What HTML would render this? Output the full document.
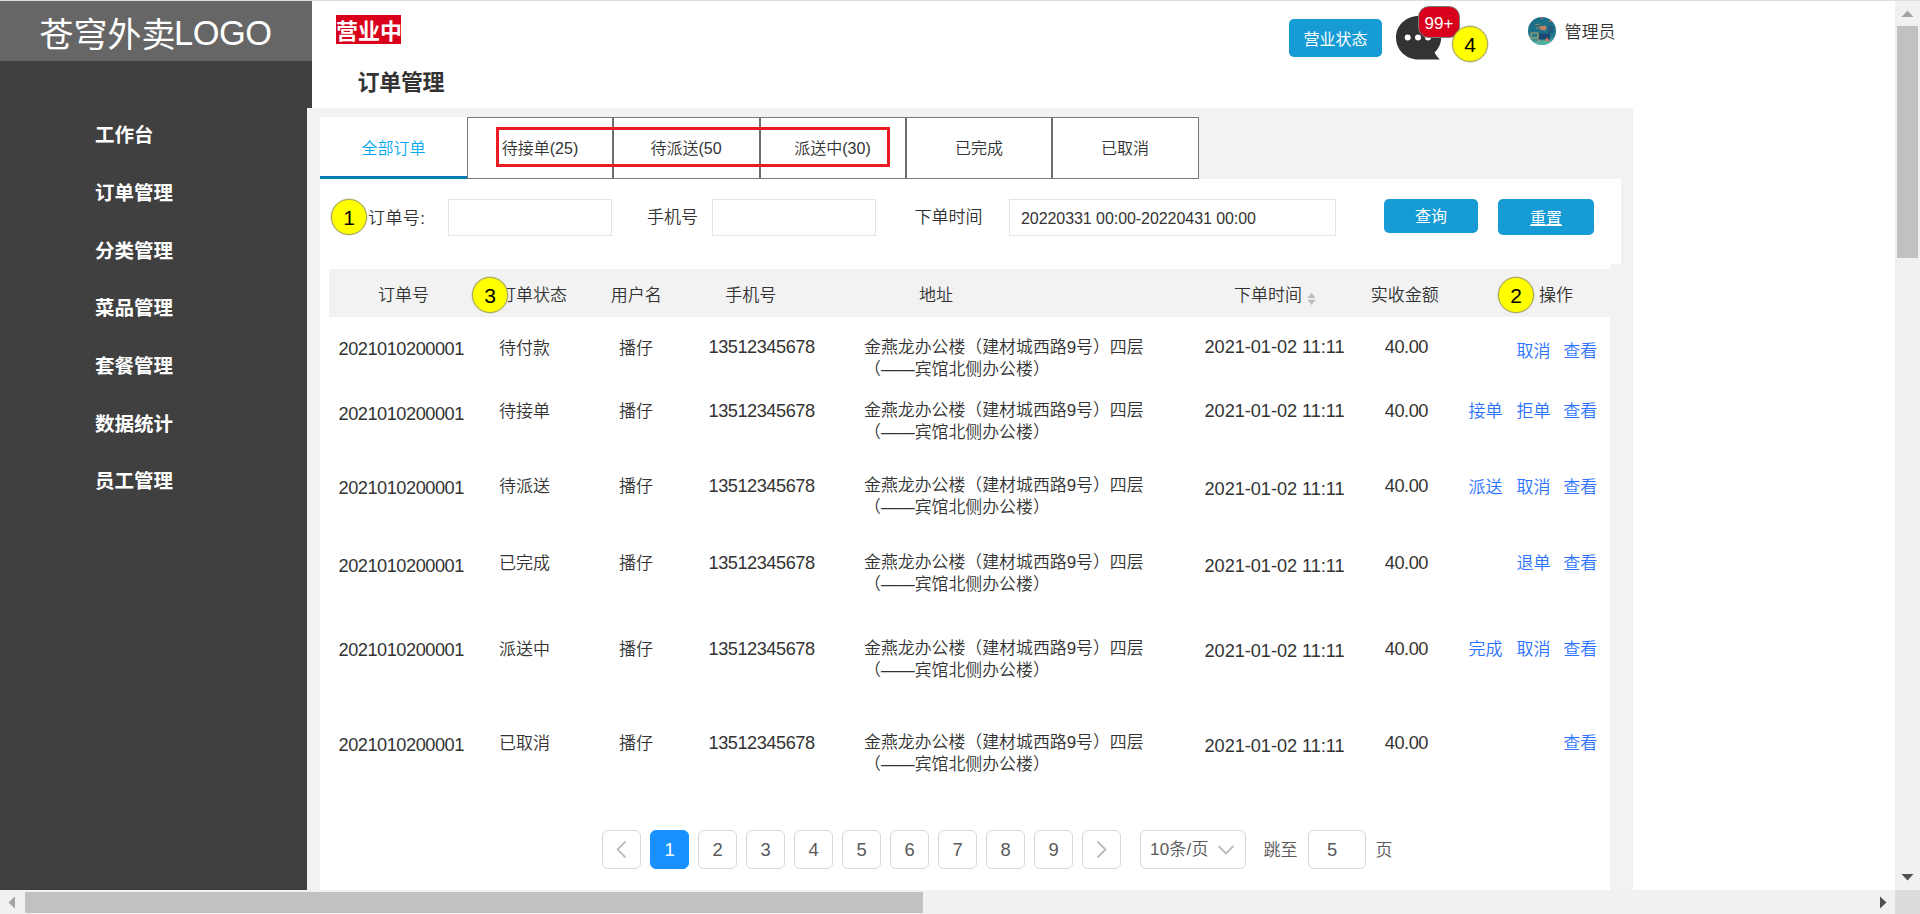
<!DOCTYPE html>
<html lang="zh-CN">
<head>
<meta charset="utf-8">
<title>订单管理</title>
<style>
html,body{margin:0;padding:0;}
body{width:1920px;height:914px;overflow:hidden;position:relative;background:#fff;
  font-family:"Liberation Sans","Noto Sans CJK SC",sans-serif;color:#333;font-size:17px;font-weight:350;}
.abs{position:absolute;}
.t{position:absolute;white-space:nowrap;line-height:1;}
#topline{left:0;top:0;width:1920px;height:1px;background:#dcdfe0;}
#side{left:0;top:0;width:312px;height:890px;background:#404040;}
#logo{left:0;top:1px;width:312px;height:60px;background:#666;}
#logo>span{left:39.5px;top:14.5px;font-size:34px;color:#fff;font-weight:400;}
#logo .lc{position:relative;top:2px;}
#logo .ll{position:relative;top:0.6px;left:-1.5px;font-size:34.4px;letter-spacing:-0.5px;}
.menu{left:95px;font-size:19.5px;font-weight:bold;color:#fff;}
#panel{left:307px;top:108px;width:1326px;height:782px;background:#f2f2f2;}
#open{left:336px;top:15px;width:65px;height:29px;background:#d9001b;}
#open span{left:0;top:5.5px;width:65px;text-align:center;font-size:22px;font-weight:bold;color:#fff;}
#title{left:357.5px;top:72px;letter-spacing:-0.3px;font-size:22px;font-weight:bold;color:#333;}
.btn{background:#169bd5;border-radius:5px;color:#fff;text-align:center;font-weight:400;}
.circle{width:34px;height:34px;border:1px solid #a8a85c;box-shadow:0 0 0 0.5px rgba(150,150,90,.5);border-radius:50%;background:#ffff00;color:#000;
  font-size:21px;text-align:center;line-height:36px;}
.tt{top:140.7px;width:146px;text-align:center;font-size:16px;color:#333;}
#filter{left:320px;top:179px;width:1301px;height:85px;background:#fff;}
#tablebg{left:320px;top:264px;width:1290px;height:626px;background:#fff;}
#thead{left:329px;top:269px;width:1281px;height:48px;background:#f2f2f2;}
.inp{border:1px solid #e4e4e4;background:#fff;box-sizing:border-box;}
.a{color:#2a72ff;}
.pg{top:830px;width:39px;height:39px;box-sizing:border-box;border:1px solid #d9d9d9;border-radius:6px;background:#fff;
  text-align:center;line-height:37px;font-size:18.4px;color:#5a5a5a;}
</style>
</head>
<body>
<div class="abs" id="side"></div>
<div class="abs" id="logo"><span class="t"><span class="lc">苍穹外卖</span><span class="ll">LOGO</span></span></div>
<div class="abs" id="topline"></div>
<div class="t menu" style="top:126px">工作台</div>
<div class="t menu" style="top:184px">订单管理</div>
<div class="t menu" style="top:241.8px">分类管理</div>
<div class="t menu" style="top:299.3px">菜品管理</div>
<div class="t menu" style="top:357px">套餐管理</div>
<div class="t menu" style="top:414.7px">数据统计</div>
<div class="t menu" style="top:472.4px">员工管理</div>

<div class="abs" id="open"><span class="t">营业中</span></div>
<div class="t" id="title">订单管理</div>

<div class="abs" id="panel"></div>
<div class="abs" id="filter"></div>
<div class="abs" id="tablebg"></div>
<div class="abs" id="thead"></div>
<div class="abs btn" style="left:1289px;top:19px;width:93px;height:38px;"><span class="t" style="left:0;width:93px;top:13px;font-size:16px;">营业状态</span></div>
<svg class="abs" style="left:1394px;top:14px" width="50" height="48" viewBox="0 0 50 48">
  <path d="M24.5 2 C11.8 2 2 11.5 2 23.6 C2 36 11.8 45.6 24.5 45.6 L45.8 45.6 C43.8 43.6 42 41.2 40.6 38.6 C44.8 34.8 47.2 29.4 47.2 23.6 C47.2 11.5 37.2 2 24.500 2 Z" fill="#333"/>
  <circle cx="13.7" cy="23.5" r="3" fill="#fff"/><circle cx="24" cy="23.5" r="3" fill="#fff"/><circle cx="34" cy="23.5" r="3" fill="#fff"/>
</svg>
<div class="abs" style="left:1418px;top:6px;width:42px;height:32px;box-sizing:border-box;border:1px solid #797979;border-radius:11px;background:#d9001b;"><span class="t" style="left:0;width:40px;text-align:center;top:7.5px;font-size:17px;color:#fff;">99+</span></div>
<div class="abs circle" style="left:1452px;top:26px;">4</div>
<svg class="abs" style="left:1528px;top:17px" width="28" height="28" viewBox="0 0 28 28">
  <defs><clipPath id="av"><circle cx="14" cy="14" r="14"/></clipPath>
  <filter id="avb" x="-20%" y="-20%" width="140%" height="140%"><feGaussianBlur stdDeviation="0.7"/></filter>
  <linearGradient id="avg" x1="0" y1="0" x2="0" y2="1"><stop offset="0" stop-color="#1b6c85"/><stop offset="0.6" stop-color="#20718a"/><stop offset="1" stop-color="#45a89a"/></linearGradient></defs>
  <g clip-path="url(#av)"><rect width="28" height="28" fill="url(#avg)"/>
  <g filter="url(#avb)">
  <path d="M11 9.500 L17 8.500 L19 11 L16.500 13.500 L12 12.500Z" fill="#c9805f"/>
  <path d="M7 8 l5 -1 M8 11 l3 0" stroke="#b98a5a" stroke-width="0.800" fill="none"/>
  <path d="M3 16 h7 v5 h-7z" fill="none" stroke="#b9a96a" stroke-width="1"/>
  <rect x="11" y="16.500" width="11" height="6" fill="#1c4a72"/>
  <rect x="20" y="9" width="5" height="7" fill="#235a7c"/>
  <path d="M9 24 l1.500 -2.500 l2 2.500z M16 24.500 l3 -4 l3 4z" fill="#dd735f"/>
  <circle cx="22.500" cy="3.500" r="1.300" fill="#d8705c"/><circle cx="13.700" cy="1" r="1" fill="#d8705c"/>
  <path d="M2 25 q12 -3 24 0 v3 h-24z" fill="#4fb0a0"/>
  </g></g>
</svg>
<div class="t" style="left:1564.5px;top:23.8px;font-size:17px;color:#333;">管理员</div>

<div class="abs" style="left:320px;top:117px;width:147px;height:59px;background:#fff;border-bottom:3px solid #027db4;"><span class="t" style="left:0;width:147px;text-align:center;top:23.8px;font-size:16px;color:#02a7f0;">全部订单</span></div>
<div class="abs" style="left:467px;top:117px;width:730px;height:60px;border:1px solid #797979;background:#fff;"></div>
<div class="abs" style="left:612px;top:118px;width:2px;height:60px;background:#6e6e6e;"></div>
<div class="abs" style="left:759px;top:118px;width:2px;height:60px;background:#6e6e6e;"></div>
<div class="abs" style="left:905px;top:118px;width:2px;height:60px;background:#6e6e6e;"></div>
<div class="abs" style="left:1051px;top:118px;width:2px;height:60px;background:#6e6e6e;"></div>
<div class="t tt" style="left:467px;">待接单(25)</div>
<div class="t tt" style="left:613px;">待派送(50</div>
<div class="t tt" style="left:760px;width:145px;">派送中(30)</div>
<div class="t tt" style="left:906px;">已完成</div>
<div class="t tt" style="left:1052px;">已取消</div>
<div class="abs" style="left:496px;top:127px;width:388px;height:34px;border:3px solid #ec1c24;"></div>

<div class="abs circle" style="left:331px;top:199px;">1</div>
<div class="t" style="left:368px;top:210.2px;letter-spacing:0.4px;">订单号:</div>
<div class="abs inp" style="left:448px;top:199px;width:164px;height:37px;"></div>
<div class="t" style="left:647px;top:208.8px;">手机号</div>
<div class="abs inp" style="left:712px;top:199px;width:164px;height:37px;"></div>
<div class="t" style="left:914.5px;top:208.8px;">下单时间</div>
<div class="abs inp" style="left:1009px;top:199px;width:327px;height:37px;"><span class="t" style="left:11px;top:10.5px;font-size:16px;letter-spacing:-0.06px;">20220331 00:00-20220431 00:00</span></div>
<div class="abs btn" style="left:1384px;top:199px;width:94px;height:34px;"><span class="t" style="left:0;width:94px;top:10px;font-size:16px;">查询</span></div>
<div class="abs btn" style="left:1498px;top:199px;width:96px;height:36px;"><span class="t" style="left:0;width:96px;top:12px;font-size:16px;text-decoration:underline;">重置</span></div>

<div class="t" style="left:378px;top:287.40px;font-size:17px;">订单号</div>
<div class="t" style="left:499px;top:287.40px;font-size:17px;">订单状态</div>
<div class="t" style="left:610.8px;top:287.40px;font-size:17px;">用户名</div>
<div class="t" style="left:725.2px;top:287.40px;font-size:17px;">手机号</div>
<div class="t" style="left:919px;top:287.40px;font-size:17px;">地址</div>
<div class="t" style="left:1234px;top:287.40px;font-size:17px;">下单时间</div>
<svg class="abs" style="left:1306.5px;top:292px" width="9" height="14" viewBox="0 0 9 14"><path d="M0.500 6 L4.500 0.800 L8.500 6Z M0.500 7.800 L4.500 13 L8.500 7.800Z" fill="#bdbdbd"/></svg>
<div class="t" style="left:1370.7px;top:287.40px;font-size:17px;">实收金额</div>
<div class="t" style="left:1539px;top:287.40px;font-size:17px;">操作</div>
<div class="abs circle" style="left:472px;top:277px;">3</div>
<div class="abs circle" style="left:1498px;top:277px;">2</div>
<div class="t" style="left:338.5px;top:339.55px;font-size:18.2px;letter-spacing:-0.47px;">2021010200001</div>
<div class="t" style="left:499px;top:339.55px;font-size:17px;">待付款</div>
<div class="t" style="left:619px;top:339.55px;font-size:17px;">播仔</div>
<div class="t" style="left:708.5px;top:337.90px;font-size:18.2px;letter-spacing:-0.47px;">13512345678</div>
<div class="t" style="left:864px;top:339.60px;font-size:16.9px;">金燕龙办公楼（建材城西路9号）四层</div>
<div class="t" style="left:864px;top:361.60px;font-size:16.9px;">（——宾馆北侧办公楼）</div>
<div class="t" style="left:1204.5px;top:338.05px;font-size:18.2px;letter-spacing:-0.05px;">2021-01-02 11:11</div>
<div class="t" style="left:1384.8px;top:337.90px;font-size:18.2px;letter-spacing:-0.47px;">40.00</div>
<div class="t a" style="left:1516.5px;top:343.10px;font-size:17px;">取消</div>
<div class="t a" style="left:1563.2px;top:343.10px;font-size:17px;">查看</div>
<div class="t" style="left:338.5px;top:404.80px;font-size:18.2px;letter-spacing:-0.47px;">2021010200001</div>
<div class="t" style="left:499px;top:403.05px;font-size:17px;">待接单</div>
<div class="t" style="left:619px;top:403.05px;font-size:17px;">播仔</div>
<div class="t" style="left:708.5px;top:401.80px;font-size:18.2px;letter-spacing:-0.47px;">13512345678</div>
<div class="t" style="left:864px;top:403.10px;font-size:16.9px;">金燕龙办公楼（建材城西路9号）四层</div>
<div class="t" style="left:864px;top:425.10px;font-size:16.9px;">（——宾馆北侧办公楼）</div>
<div class="t" style="left:1204.5px;top:401.80px;font-size:18.2px;letter-spacing:-0.05px;">2021-01-02 11:11</div>
<div class="t" style="left:1384.8px;top:401.80px;font-size:18.2px;letter-spacing:-0.47px;">40.00</div>
<div class="t a" style="left:1468.5px;top:403.20px;font-size:17px;">接单</div>
<div class="t a" style="left:1516.5px;top:403.20px;font-size:17px;">拒单</div>
<div class="t a" style="left:1563.2px;top:403.20px;font-size:17px;">查看</div>
<div class="t" style="left:338.5px;top:479.00px;font-size:18.2px;letter-spacing:-0.47px;">2021010200001</div>
<div class="t" style="left:499px;top:478.30px;font-size:17px;">待派送</div>
<div class="t" style="left:619px;top:478.30px;font-size:17px;">播仔</div>
<div class="t" style="left:708.5px;top:477.20px;font-size:18.2px;letter-spacing:-0.47px;">13512345678</div>
<div class="t" style="left:864px;top:478.35px;font-size:16.9px;">金燕龙办公楼（建材城西路9号）四层</div>
<div class="t" style="left:864px;top:500.35px;font-size:16.9px;">（——宾馆北侧办公楼）</div>
<div class="t" style="left:1204.5px;top:480.20px;font-size:18.2px;letter-spacing:-0.05px;">2021-01-02 11:11</div>
<div class="t" style="left:1384.8px;top:477.20px;font-size:18.2px;letter-spacing:-0.47px;">40.00</div>
<div class="t a" style="left:1468.5px;top:478.60px;font-size:17px;">派送</div>
<div class="t a" style="left:1516.5px;top:478.60px;font-size:17px;">取消</div>
<div class="t a" style="left:1563.2px;top:478.60px;font-size:17px;">查看</div>
<div class="t" style="left:338.5px;top:556.50px;font-size:18.2px;letter-spacing:-0.47px;">2021010200001</div>
<div class="t" style="left:499px;top:555.30px;font-size:17px;">已完成</div>
<div class="t" style="left:619px;top:555.30px;font-size:17px;">播仔</div>
<div class="t" style="left:708.5px;top:553.80px;font-size:18.2px;letter-spacing:-0.47px;">13512345678</div>
<div class="t" style="left:864px;top:555.35px;font-size:16.9px;">金燕龙办公楼（建材城西路9号）四层</div>
<div class="t" style="left:864px;top:577.35px;font-size:16.9px;">（——宾馆北侧办公楼）</div>
<div class="t" style="left:1204.5px;top:557.30px;font-size:18.2px;letter-spacing:-0.05px;">2021-01-02 11:11</div>
<div class="t" style="left:1384.8px;top:553.80px;font-size:18.2px;letter-spacing:-0.47px;">40.00</div>
<div class="t a" style="left:1516.5px;top:555.30px;font-size:17px;">退单</div>
<div class="t a" style="left:1563.2px;top:555.30px;font-size:17px;">查看</div>
<div class="t" style="left:338.5px;top:641.30px;font-size:18.2px;letter-spacing:-0.47px;">2021010200001</div>
<div class="t" style="left:499px;top:641.10px;font-size:17px;">派送中</div>
<div class="t" style="left:619px;top:641.10px;font-size:17px;">播仔</div>
<div class="t" style="left:708.5px;top:639.80px;font-size:18.2px;letter-spacing:-0.47px;">13512345678</div>
<div class="t" style="left:864px;top:641.15px;font-size:16.9px;">金燕龙办公楼（建材城西路9号）四层</div>
<div class="t" style="left:864px;top:663.15px;font-size:16.9px;">（——宾馆北侧办公楼）</div>
<div class="t" style="left:1204.5px;top:642.00px;font-size:18.2px;letter-spacing:-0.05px;">2021-01-02 11:11</div>
<div class="t" style="left:1384.8px;top:639.80px;font-size:18.2px;letter-spacing:-0.47px;">40.00</div>
<div class="t a" style="left:1468.5px;top:641.10px;font-size:17px;">完成</div>
<div class="t a" style="left:1516.5px;top:641.10px;font-size:17px;">取消</div>
<div class="t a" style="left:1563.2px;top:641.10px;font-size:17px;">查看</div>
<div class="t" style="left:338.5px;top:735.90px;font-size:18.2px;letter-spacing:-0.47px;">2021010200001</div>
<div class="t" style="left:499px;top:735.20px;font-size:17px;">已取消</div>
<div class="t" style="left:619px;top:735.20px;font-size:17px;">播仔</div>
<div class="t" style="left:708.5px;top:734.30px;font-size:18.2px;letter-spacing:-0.47px;">13512345678</div>
<div class="t" style="left:864px;top:735.25px;font-size:16.9px;">金燕龙办公楼（建材城西路9号）四层</div>
<div class="t" style="left:864px;top:757.25px;font-size:16.9px;">（——宾馆北侧办公楼）</div>
<div class="t" style="left:1204.5px;top:736.90px;font-size:18.2px;letter-spacing:-0.05px;">2021-01-02 11:11</div>
<div class="t" style="left:1384.8px;top:734.30px;font-size:18.2px;letter-spacing:-0.47px;">40.00</div>
<div class="t a" style="left:1563.2px;top:735.30px;font-size:17px;">查看</div>

<div class="abs pg" style="left:602px;"><svg width="37" height="37" viewBox="0 0 37 37" style="display:block"><path d="M22.500 10.500 L14.500 18.500 L22.500 26.500" fill="none" stroke="#bcbcbc" stroke-width="1.8"/></svg></div>
<div class="abs pg" style="left:650px;background:#1890ff;border-color:#1890ff;color:#fff;">1</div>
<div class="abs pg" style="left:698px;">2</div>
<div class="abs pg" style="left:746px;">3</div>
<div class="abs pg" style="left:794px;">4</div>
<div class="abs pg" style="left:842px;">5</div>
<div class="abs pg" style="left:890px;">6</div>
<div class="abs pg" style="left:938px;">7</div>
<div class="abs pg" style="left:986px;">8</div>
<div class="abs pg" style="left:1034px;">9</div>
<div class="abs pg" style="left:1082px;"><svg width="37" height="37" viewBox="0 0 37 37" style="display:block"><path d="M14.500 10.500 L22.500 18.500 L14.500 26.500" fill="none" stroke="#bcbcbc" stroke-width="1.8"/></svg></div>
<div class="abs pg" style="left:1140px;width:106px;"><span class="t" style="left:9px;top:9.8px;font-size:17px;color:#5a5a5a;letter-spacing:0.2px;">10条/页</span><svg class="abs" style="left:76px;top:13px" width="18" height="12" viewBox="0 0 18 12"><path d="M1.500 2 L9 9.500 L16.500 2" fill="none" stroke="#bcbcbc" stroke-width="1.8"/></svg></div>
<div class="t" style="left:1263.5px;top:842px;font-size:17px;color:#5a5a5a;">跳至</div>
<div class="abs pg" style="left:1308px;width:58px;"><span class="t" style="left:18px;top:9.5px;font-size:18.4px;color:#5a5a5a;">5</span></div>
<div class="t" style="left:1375.5px;top:842px;font-size:17px;color:#5a5a5a;">页</div>

<div class="abs" style="left:1895px;top:1px;width:25px;height:889px;background:#f1f1f1;"></div>
<div class="abs" style="left:1897px;top:26px;width:21px;height:232px;background:#c1c1c1;"></div>
<svg class="abs" style="left:1901px;top:10px" width="13" height="8" viewBox="0 0 13 8"><path d="M0.500 7 L6.500 0.500 L12.500 7Z" fill="#a3a3a3"/></svg>
<svg class="abs" style="left:1901px;top:873px" width="13" height="8" viewBox="0 0 13 8"><path d="M0.500 1 L6.500 7.500 L12.500 1Z" fill="#505050"/></svg>
<div class="abs" style="left:0;top:890px;width:1895px;height:24px;background:#f1f1f1;"></div>
<div class="abs" style="left:25px;top:892px;width:898px;height:21px;background:#c1c1c1;"></div>
<svg class="abs" style="left:8px;top:896px" width="8" height="13" viewBox="0 0 8 13"><path d="M7 0.500 L0.500 6.500 L7 12.500Z" fill="#a3a3a3"/></svg>
<svg class="abs" style="left:1879px;top:896px" width="8" height="13" viewBox="0 0 8 13"><path d="M1 0.500 L7.500 6.500 L1 12.500Z" fill="#505050"/></svg>
<div class="abs" style="left:1895px;top:890px;width:25px;height:24px;background:#dcdcdc;"></div>

</body>
</html>
